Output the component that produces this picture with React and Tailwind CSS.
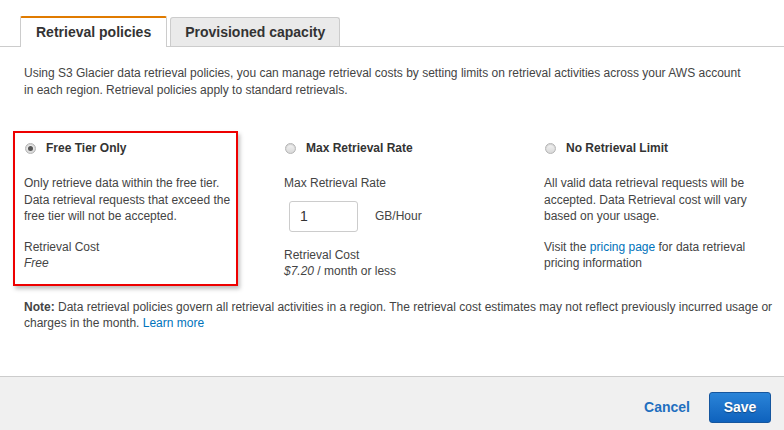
import React, { useState } from 'react';

function Radio({ checked }) {
  return (
    <span className="ml-px flex h-[11px] w-[11px] shrink-0 items-center justify-center rounded-full border border-[#b5b5b5] bg-gradient-to-b from-[#f4f4f4] to-[#d8d8d8] shadow-[inset_0_1px_1px_rgba(0,0,0,0.15)]">
      {checked && <span className="h-[5px] w-[5px] rounded-full bg-[#555]" />}
    </span>
  );
}

function App() {
  const [tab, setTab] = useState('policies');
  const [policy, setPolicy] = useState('free');
  const [rate, setRate] = useState('1');

  return (
    <div className="flex h-[430px] w-[784px] flex-col bg-white font-['Liberation_Sans',Arial,sans-serif] text-[12px] text-[#444]">
      {/* tabs */}
      <div className="flex h-[47px] items-end gap-[3px] border-b border-[#ccc] pl-[20px]">
        <button
          onClick={() => setTab('policies')}
          className="-mb-px h-[31px] rounded-t-[2px] border-x border-t-[2px] border-x-[#ccc] border-t-[#e07b00] bg-white px-[15px] text-[14px] font-bold text-[#333]"
        >
          Retrieval policies
        </button>
        <button
          onClick={() => setTab('capacity')}
          className="h-[29px] rounded-t-[3px] border-x border-t border-[#ccc] bg-[#eaeaea] px-[14px] text-[14px] font-bold text-[#333]"
        >
          Provisioned capacity
        </button>
      </div>

      <div className="pl-[24px] pr-[10px]">
        <p className="mt-[18px] whitespace-nowrap leading-[17px]">
          Using S3 Glacier data retrieval policies, you can manage retrieval costs by setting limits on retrieval activities across your AWS account
          <br />
          in each region. Retrieval policies apply to standard retrievals.
        </p>

        <div className="mt-[32px] grid grid-cols-[260px_260px_1fr] items-start">
          {/* free tier - highlighted */}
          <div
            onClick={() => setPolicy('free')}
            className="-ml-[11px] w-[225px] border-2 border-[#ee0000] pb-[12px] pl-[9px] pr-[2px] pt-[7px] shadow-[2px_3px_4px_rgba(0,0,0,0.25)]"
          >
            <div className="flex h-[16px] items-center gap-[10px]">
              <Radio checked={policy === 'free'} />
              <span className="font-bold text-[#333]">Free Tier Only</span>
            </div>
            <p className="mt-[19px] whitespace-nowrap leading-[16.5px]">
              Only retrieve data within the free tier.
              <br />
              Data retrieval requests that exceed the
              <br />
              free tier will not be accepted.
            </p>
            <p className="mt-[14px] leading-[16.5px]">Retrieval Cost</p>
            <p className="italic leading-[16.5px]">Free</p>
          </div>

          {/* max rate */}
          <div onClick={() => setPolicy('max')} className="pt-[9px]">
            <div className="flex h-[16px] items-center gap-[10px]">
              <Radio checked={policy === 'max'} />
              <span className="font-bold text-[#333]">Max Retrieval Rate</span>
            </div>
            <p className="mt-[19px] leading-[16.5px]">Max Retrieval Rate</p>
            <div className="mt-[9px] flex items-center">
              <input
                value={rate}
                onChange={(e) => setRate(e.target.value)}
                className="ml-[5px] h-[31px] w-[69px] rounded-[3px] border border-[#ccc] px-[10px] text-[14px] text-[#333] outline-none"
              />
              <span className="ml-[17px] text-[12px]">GB/Hour</span>
            </div>
            <p className="mt-[15px] leading-[16.5px]">Retrieval Cost</p>
            <p className="leading-[16.5px]">
              <span className="italic">$7.20</span> / month or less
            </p>
          </div>

          {/* no limit */}
          <div onClick={() => setPolicy('none')} className="pt-[9px]">
            <div className="flex h-[16px] items-center gap-[10px]">
              <Radio checked={policy === 'none'} />
              <span className="font-bold text-[#333]">No Retrieval Limit</span>
            </div>
            <p className="mt-[19px] whitespace-nowrap leading-[16.5px]">
              All valid data retrieval requests will be
              <br />
              accepted. Data Retrieval cost will vary
              <br />
              based on your usage.
            </p>
            <p className="mt-[14px] whitespace-nowrap leading-[16.5px]">
              Visit the <a href="#" className="text-[#0073bb]">pricing page</a> for data retrieval
              <br />
              pricing information
            </p>
          </div>
        </div>

        <p className="mt-[13px] whitespace-nowrap leading-[16px]">
          <span className="font-bold">Note:</span> Data retrieval policies govern all retrieval activities in a region. The retrieval cost estimates may not reflect previously incurred usage or
          <br />
          charges in the month. <a href="#" className="text-[#0073bb]">Learn more</a>
        </p>
      </div>

      <div className="flex-1" />

      {/* footer */}
      <div className="flex h-[54px] items-start justify-end gap-[19px] border-t border-[#ccc] bg-[#f0f0f0] pr-[13px] pt-[15px]">
        <button className="h-[31px] text-[14px] font-bold text-[#1f6fbf]">Cancel</button>
        <button className="h-[31px] w-[62px] rounded-[3px] border border-[#15569e] bg-gradient-to-b from-[#2a84d8] to-[#0e62bd] text-[14px] font-bold text-white [text-shadow:0_1px_1px_rgba(0,0,0,0.35)]">
          Save
        </button>
      </div>
    </div>
  );
}

export default App;
